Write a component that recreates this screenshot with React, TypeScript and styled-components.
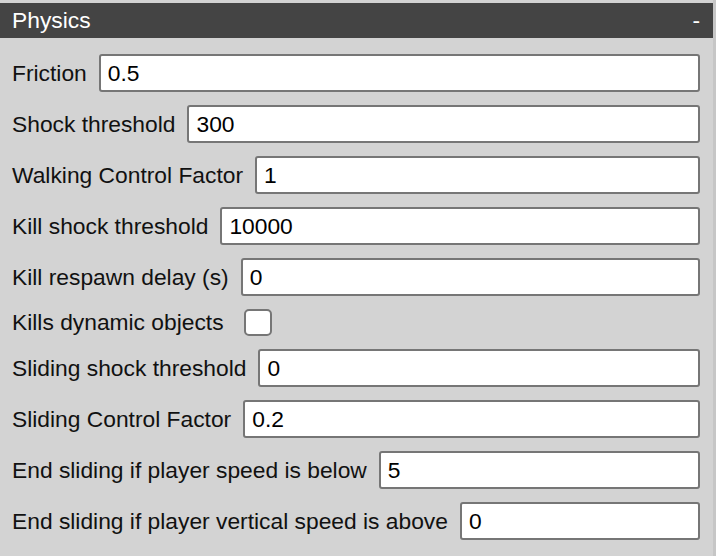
import React from 'react';
import styled, {createGlobalStyle} from "styled-components";

const GlobalStyle = createGlobalStyle`
  html, body {
    margin: 0;
    padding: 0;
    background-color: #d3d3d3;
  }
  body {
    font-family: "Liberation Sans", Arial, sans-serif;
  }
`

type FieldType = {
    label: string;
    value?: string;
    checkbox?: boolean;
}

const fields: FieldType[] = [
    {label: "Friction", value: "0.5"},
    {label: "Shock threshold", value: "300"},
    {label: "Walking Control Factor", value: "1"},
    {label: "Kill shock threshold", value: "10000"},
    {label: "Kill respawn delay (s)", value: "0"},
    {label: "Kills dynamic objects", checkbox: true},
    {label: "Sliding shock threshold", value: "0"},
    {label: "Sliding Control Factor", value: "0.2"},
    {label: "End sliding if player speed is below", value: "5"},
    {label: "End sliding if player vertical speed is above", value: "0"},
]

export default function App() {
    return (
        <>
            <GlobalStyle/>
            <StyledPanel>
                <PanelHeader>
                    <HeaderTitle>Physics</HeaderTitle>
                    <CollapseButton>-</CollapseButton>
                </PanelHeader>
                <FieldList>
                    {fields.map(f => (
                        <FieldRow key={f.label}>
                            <FieldLabel>{f.label}</FieldLabel>
                            {f.checkbox
                                ? <StyledCheckbox type="checkbox"/>
                                : <StyledInput type="text" defaultValue={f.value}/>}
                        </FieldRow>
                    ))}
                </FieldList>
            </StyledPanel>
        </>
    );
}

const StyledPanel = styled.div`
  width: 716px;
  height: 556px;
  padding-top: 3px;
  box-sizing: border-box;
  border-right: 3px solid #c6c6c6;
  background-color: #d3d3d3;
`
const PanelHeader = styled.div`
  display: flex;
  justify-content: space-between;
  align-items: center;
  height: 35px;
  padding: 0 13px 0 12px;
  background-color: #444444;
  color: #ffffff;
`
const HeaderTitle = styled.span`
  font-size: 22.8px;
  line-height: 35px;
`
const CollapseButton = styled.span`
  font-size: 22.8px;
  line-height: 35px;
`
const FieldList = styled.div`
  display: flex;
  flex-direction: column;
  gap: 13px;
  padding: 16px 13px 0 12px;
`
const FieldRow = styled.label`
  display: flex;
  align-items: center;
  gap: 12px;
`
const FieldLabel = styled.span`
  font-size: 22.8px;
  color: #111111;
  white-space: nowrap;
`
const StyledInput = styled.input`
  flex: 1;
  min-width: 0;
  height: 38px;
  box-sizing: border-box;
  margin: 0;
  padding: 0 7px;
  border: 2px solid #767676;
  border-radius: 3px;
  background: #ffffff;
  font-family: "Liberation Sans", Arial, sans-serif;
  font-size: 22.8px;
  color: #000000;
  outline: none;
`
const StyledCheckbox = styled.input`
  appearance: none;
  width: 28px;
  height: 27px;
  margin: 0 0 0 8px;
  box-sizing: border-box;
  border: 2px solid #767676;
  border-radius: 5px;
  background: #ffffff;
`
